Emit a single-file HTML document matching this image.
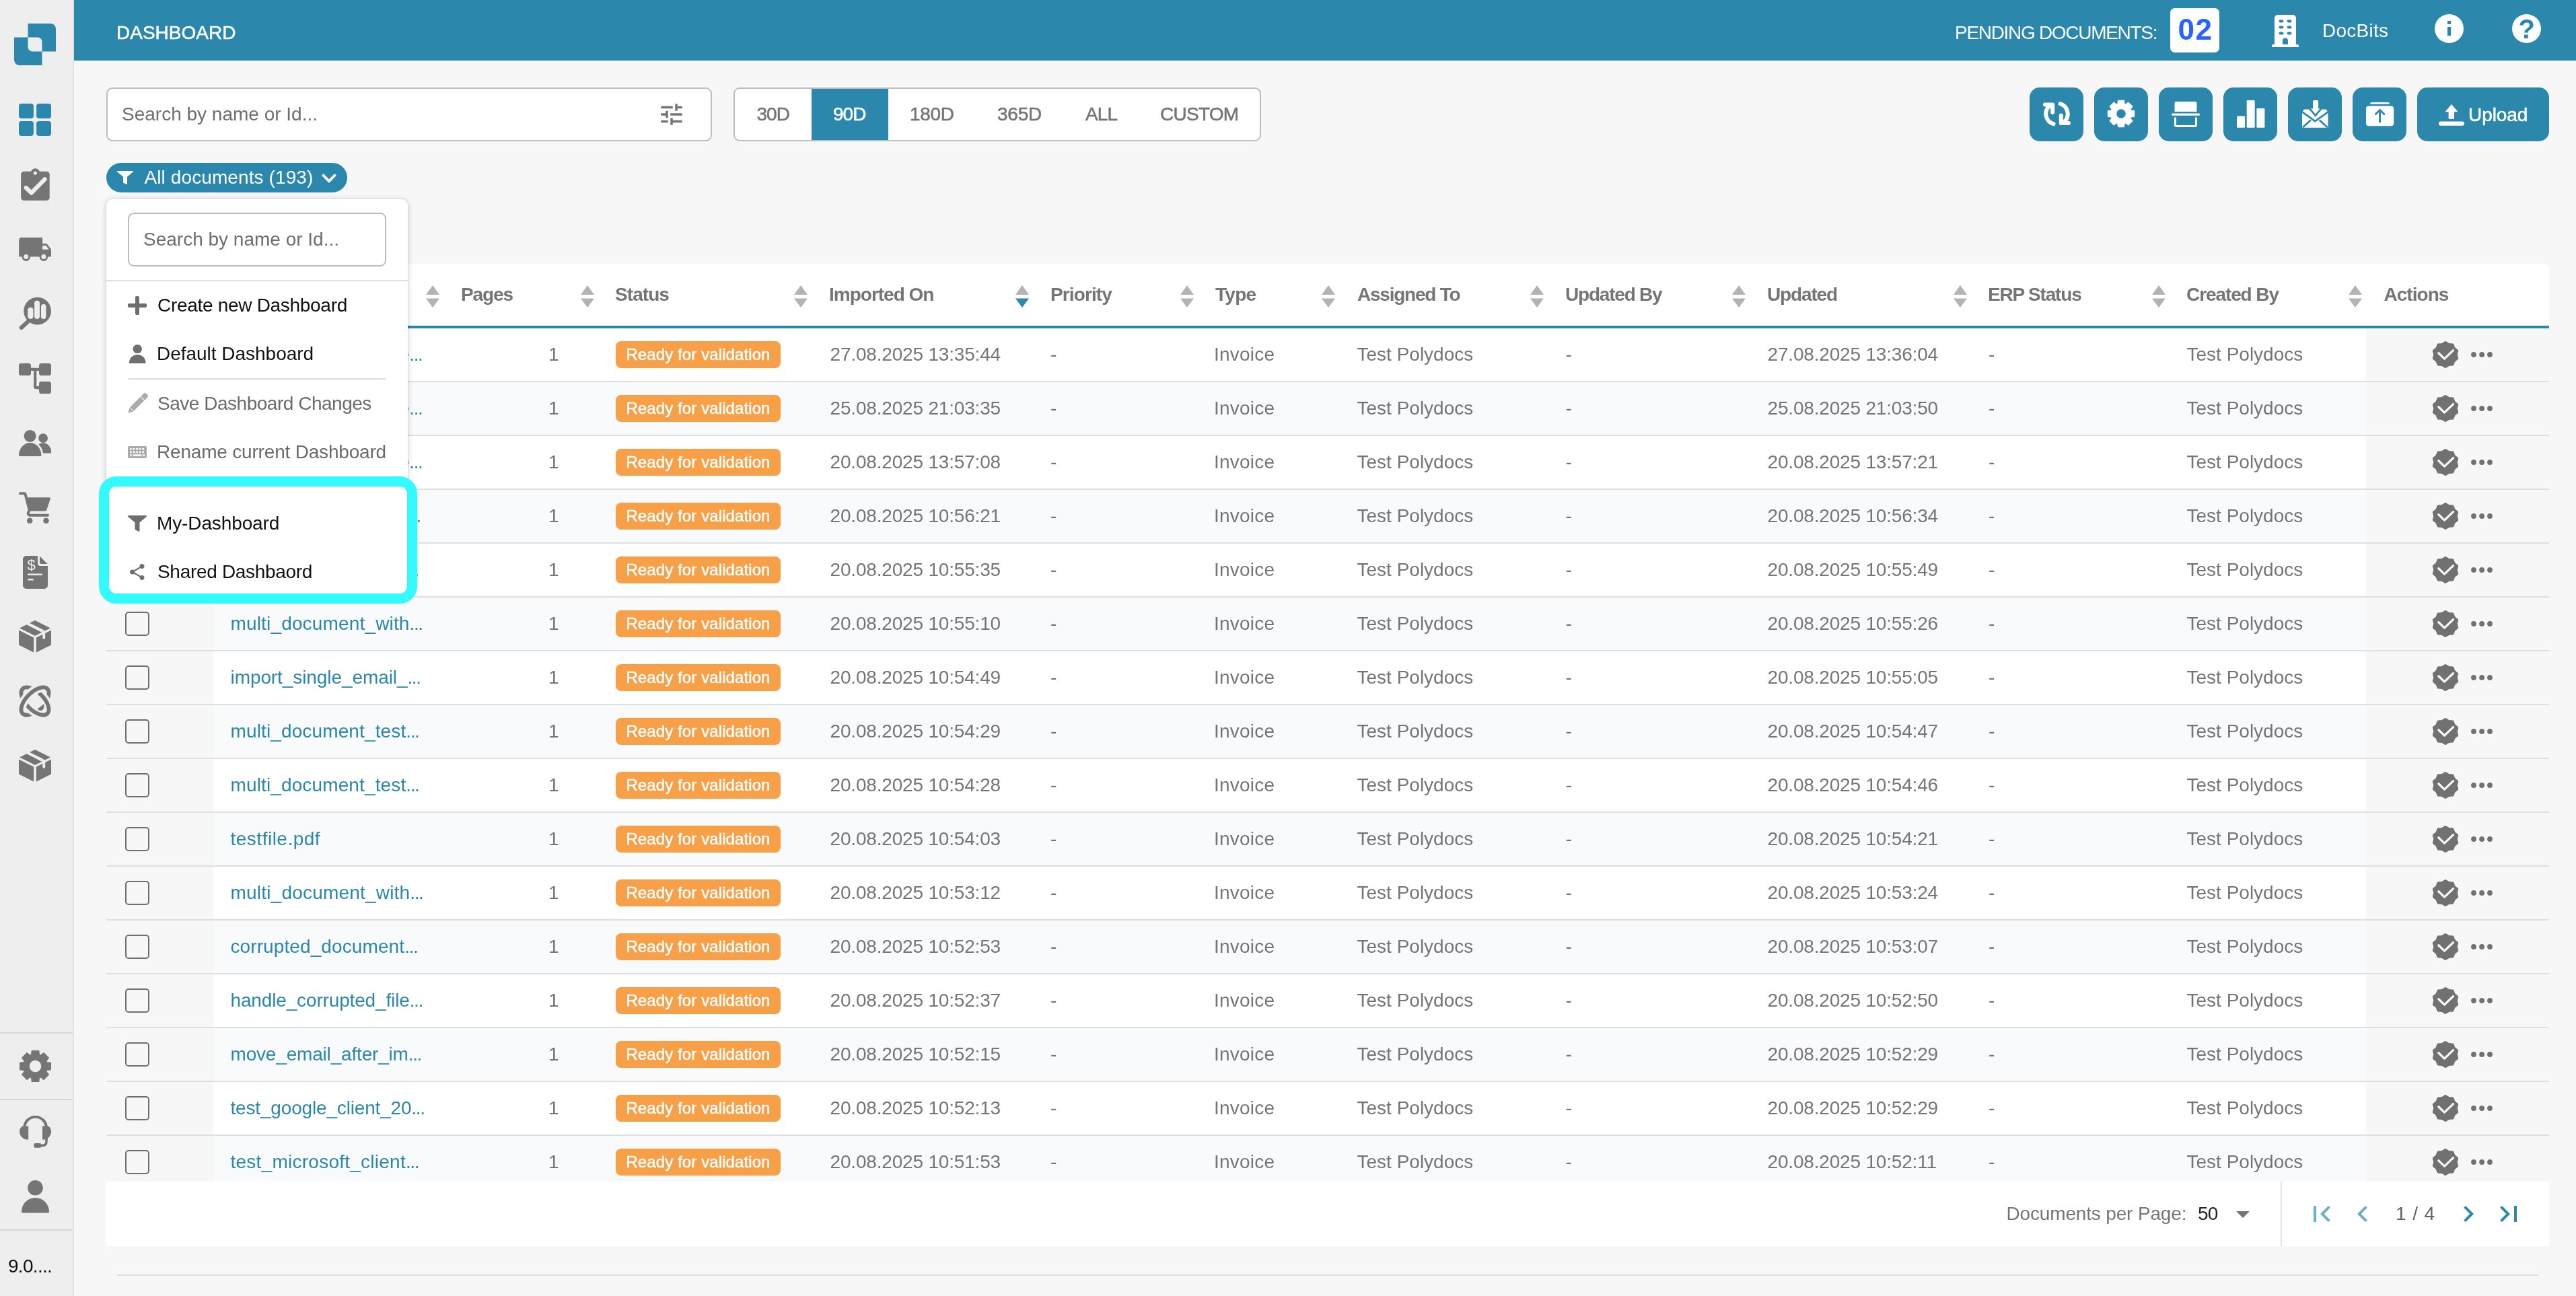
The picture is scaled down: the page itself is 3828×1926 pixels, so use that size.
<!DOCTYPE html><html lang="en"><head><meta charset="utf-8"><title>Dashboard</title><style>
*{box-sizing:border-box;margin:0;padding:0}
html,body{width:3828px;height:1926px;overflow:hidden;background:#f7f7f7}
body{will-change:transform;font-family:"Liberation Sans",sans-serif;font-size:28px;color:#757575;position:relative}
.ic{position:absolute;fill:currentColor;overflow:visible}
.t{position:absolute;white-space:nowrap;display:block}
.m{-webkit-text-stroke:0.55px currentColor}
.b{font-weight:bold}
#side{position:absolute;left:0;top:0;width:108px;height:1926px;background:#eeeeee}
#sideb{position:absolute;left:108px;top:0;width:2px;height:1926px;background:#e2e2e2}
.sd{position:absolute;left:0;width:108px;height:2px;background:#d6d6d6}
#top{position:absolute;left:110px;top:0;width:3718px;height:90px;background:#2b87ab}
.box{position:absolute;background:#fff;border:2px solid #bdbdbd;border-radius:9px}
.abtn{position:absolute;top:130px;width:80px;height:80px;border-radius:15px;background:#2b87ab}
#pill{position:absolute;left:158px;top:242px;width:358px;height:44px;border-radius:22px;background:#2b87ab}
.seg{position:absolute;top:132px;height:76px}
.row{position:absolute;left:158px;width:3630px;height:80px;border-bottom:2px solid #dfdfdf}
.row.o{background:#fff} .row.e{background:#f9fafc}
.cb{position:absolute;left:0;top:0;width:159px;height:78px;background:#f7f7f7}
.ck{position:absolute;left:28px;top:21px;width:36px;height:36px;border:2px solid #6f6f6f;border-radius:5px;background:transparent}
.ac{position:absolute;left:3358px;top:0;width:272px;height:78px;background:#f7f7f7}
.c{position:absolute;top:18.5px;height:40px;line-height:40px;white-space:nowrap}
.lnk{color:#2b87ab;letter-spacing:0.08px}
.bdg{position:absolute;left:757px;top:19px;width:245px;height:40px;border-radius:8px;background:#f7a048;color:#fff;font-size:24px;line-height:40px;text-align:center;letter-spacing:0.1px;-webkit-text-stroke:0.5px #fff}
.d{letter-spacing:-0.18px}
.el{letter-spacing:-1.4px}
.hd{position:absolute;font-weight:bold;white-space:nowrap;height:40px;line-height:40px;top:418px}
</style></head><body>
<div id="side"></div><div id="sideb"></div>
<svg class="ic" style="left:21px;top:35px;width:62px;height:62px;color:#2b87ab;" viewBox="0 0 62 62"><path d="M20.500 0H54a8 8 0 0 1 8 8V41.500H20.500z"/><path d="M0 20.500H41.500V62H8a8 8 0 0 1-8-8z"/><path fill="#eeeeee" d="M20.500 20.500H35a6.500 6.500 0 0 1 6.500 6.500V41.500H27a6.500 6.500 0 0 1-6.500-6.500z"/></svg>
<svg class="ic" style="left:28px;top:154px;width:48px;height:48px;color:#2b87ab;" viewBox="0 0 48 48"><rect x="0" y="0" width="21.900" height="21.900" rx="4"/><rect x="26.100" y="0" width="21.900" height="21.900" rx="4"/><rect x="0" y="26.100" width="21.900" height="21.900" rx="4"/><rect x="26.100" y="26.100" width="21.900" height="21.900" rx="4"/></svg>
<svg class="ic" style="left:31px;top:250px;width:43px;height:48px;color:#757575;" viewBox="0 0 43 48"><rect x="0.100" y="4.700" width="42.600" height="43.300" rx="4.600"/><circle cx="21.400" cy="6.900" r="6.700"/><circle cx="21.400" cy="7.300" r="2.500" fill="#eeeeee"/><path d="M7.700 29L15.700 36.600L35.500 16.400" fill="none" stroke="#eeeeee" stroke-width="6.300" stroke-linecap="round" stroke-linejoin="round"/></svg>
<svg class="ic" style="left:28px;top:353px;width:48px;height:35px;color:#757575;" viewBox="0 0 48 35"><path d="M0.200 4a4 4 0 0 1 4-4H35.100V9H41.400L48 17.500V28.600H0.200Z"/><path d="M35.100 12.100H40.600L44.600 17.800H35.100Z" fill="#eeeeee"/><circle cx="10.700" cy="28.600" r="6.300"/><circle cx="36.900" cy="28.600" r="6.300"/><circle cx="10.700" cy="28.600" r="3.500" fill="#eeeeee"/><circle cx="36.900" cy="28.600" r="3.500" fill="#eeeeee"/></svg>
<svg class="ic" style="left:28px;top:442px;width:48px;height:48px;color:#757575;" viewBox="0 0 48 48"><circle cx="27.600" cy="20.200" r="20.400"/><path d="M3.700 45L14.500 35" stroke="currentColor" stroke-width="6" stroke-linecap="round" fill="none"/><g fill="#eeeeee"><rect x="13.300" y="14.900" width="8.100" height="17" rx="3.800"/><rect x="23.100" y="4.800" width="7.900" height="27.100" rx="3.800"/><rect x="33" y="10" width="7.500" height="21.900" rx="3.700"/></g></svg>
<svg class="ic" style="left:28px;top:540px;width:48px;height:45px;color:#757575;" viewBox="0 0 48 45"><rect x="0" y="0" width="18" height="18" rx="3.600"/><rect x="30" y="0" width="18" height="18" rx="3.600"/><rect x="30" y="27" width="18" height="18" rx="3.600"/><path d="M17 8.800H31M24.200 8.800V34.600Q24.200 36.100 25.700 36.100H31" stroke="currentColor" stroke-width="4.200" fill="none"/></svg>
<svg class="ic" style="left:28px;top:639px;width:48.2px;height:39px;color:#757575;" viewBox="0 0 48.2 39"><circle cx="36.100" cy="12.100" r="6.900"/><path d="M24 34.400V33A12.100 13.800 0 0 1 48.200 33Q48.200 34.400 46.700 34.400Z"/><path d="M0 37.400A16.700 18.300 0 0 1 33.400 37.400Q33.400 38.900 31.900 38.900H1.500Q0 38.900 0 37.400Z" stroke="#eeeeee" stroke-width="5.600"/><path d="M0 37.400A16.700 18.300 0 0 1 33.400 37.400Q33.400 38.900 31.900 38.900H1.500Q0 38.900 0 37.400Z"/><circle cx="16.600" cy="8.900" r="9"/></svg>
<svg class="ic" style="left:28px;top:731px;width:48px;height:47px;color:#757575;" viewBox="0 0 48 47"><path d="M11 8.300H45Q47.400 8.300 46.700 10.600L41.500 26.500Q40.900 28.400 38.900 28.400H15Z"/><path d="M2 2.200H8.200Q9.300 2.200 9.600 3.300L15.800 27.500Q13.300 30.500 13.800 32.500Q14.400 34.800 17 34.800H43" fill="none" stroke="currentColor" stroke-width="4" stroke-linecap="round" stroke-linejoin="round"/><circle cx="16.200" cy="42.800" r="4.300"/><circle cx="40.500" cy="42.800" r="4.300"/></svg>
<svg class="ic" style="left:34px;top:826px;width:37px;height:49px;color:#757575;" viewBox="0 0 37 49"><path d="M5 0H22V11a4 4 0 0 0 4 4H37V44a5 5 0 0 1-5 5H5a5 5 0 0 1-5-5V5a5 5 0 0 1 5-5z"/><path d="M25 0.500L36.500 12H27a2 2 0 0 1-2-2z"/><text x="12.500" y="20.700" font-family="Liberation Sans, sans-serif" font-size="22" text-anchor="middle" fill="#eeeeee">$</text><rect x="7" y="26.500" width="22" height="2.600" rx="1" fill="#eeeeee"/><rect x="7" y="34" width="9" height="2.600" rx="1" fill="#eeeeee"/></svg>
<svg class="ic" style="left:28px;top:921px;width:48px;height:49.5px;color:#757575;" viewBox="0 0 48 49.5"><path d="M24 1L48 13V37.600L24 49.500L0 37.600V13Z"/><g fill="none" stroke="#eeeeee"><path d="M-1 13.300L24 25.800L49 13.300" stroke-width="3.200"/><path d="M24 25.800V50" stroke-width="3.800"/><path d="M9.900 4.100L35.600 17" stroke-width="4.200"/><path d="M37.250 17.500V26.800" stroke-width="3.900" stroke-linecap="round"/></g></svg>
<svg class="ic" style="left:28px;top:1018px;width:48px;height:48px;color:#757575;" viewBox="0 0 48 48"><defs><clipPath id="otl"><path d="M-6 -6H54L-6 54Z"/></clipPath><clipPath id="obr"><path d="M54 -6V54H-6Z"/></clipPath><mask id="om" maskUnits="userSpaceOnUse" x="-6" y="-6" width="60" height="60"><rect x="-6" y="-6" width="60" height="60" fill="#fff"/><g clip-path="url(#obr)"><ellipse cx="24" cy="24" rx="26" ry="13" transform="rotate(45 24 24)" fill="#000" stroke="#000" stroke-width="13.500"/></g></mask></defs><g fill="none" stroke-width="5.800"><ellipse cx="24" cy="24" rx="26" ry="13" transform="rotate(45 24 24)" stroke="currentColor"/><g clip-path="url(#otl)"><ellipse cx="24" cy="24" rx="26" ry="13" transform="rotate(-45 24 24)" stroke="#eeeeee" stroke-width="13.500"/></g><g mask="url(#om)"><ellipse cx="24" cy="24" rx="26" ry="13" transform="rotate(-45 24 24)" stroke="currentColor"/></g></g><path d="M37.300 28L27.800 35.600Q30 38.600 33.500 38Q38.400 36 37.300 28Z"/></svg>
<svg class="ic" style="left:28px;top:1113px;width:48px;height:49.5px;color:#757575;" viewBox="0 0 48 49.5"><path d="M24 1L48 13V37.600L24 49.500L0 37.600V13Z"/><g fill="none" stroke="#eeeeee"><path d="M-1 13.300L24 25.800L49 13.300" stroke-width="3.200"/><path d="M24 25.800V50" stroke-width="3.800"/><path d="M9.900 4.100L35.600 17" stroke-width="4.200"/><path d="M37.250 17.500V26.800" stroke-width="3.900" stroke-linecap="round"/></g></svg>
<div class="sd" style="top:1534px"></div>
<svg class="ic" style="left:27.5px;top:1559.5px;width:49px;height:49px;color:#757575;" viewBox="-21 -21 42 42"><path d="M-4.82 -14.41L-4.29 -19.33L4.29 -19.33L4.82 -14.41L6.78 -13.60L10.64 -16.70L16.70 -10.64L13.60 -6.78L14.41 -4.82L19.33 -4.29L19.33 4.29L14.41 4.82L13.60 6.78L16.70 10.64L10.64 16.70L6.78 13.60L4.82 14.41L4.29 19.33L-4.29 19.33L-4.82 14.41L-6.78 13.60L-10.64 16.70L-16.70 10.64L-13.60 6.78L-14.41 4.82L-19.33 4.29L-19.33 -4.29L-14.41 -4.82L-13.60 -6.78L-16.70 -10.64L-10.64 -16.70L-6.78 -13.60ZM8.3 0A8.3 8.3 0 1 0 -8.3 0A8.3 8.3 0 1 0 8.3 0Z" fill-rule="evenodd" stroke="currentColor" stroke-width="1.6" stroke-linejoin="round"/></svg>
<div class="sd" style="top:1633px"></div>
<svg class="ic" style="left:30px;top:1658px;width:45.2px;height:48px;color:#757575;" viewBox="0 0 45.2 48"><path d="M6.400 17.500A16.200 15.600 0 0 1 38.800 17.500" fill="none" stroke="currentColor" stroke-width="3.900"/><path d="M12.200 15.600V34.600Q12.200 36 10.600 35.800C-3.500 34 -3.500 17.500 4.300 15.600Z"/><path d="M33 15.600V34.600Q33 36 34.600 35.800C48.700 34 48.700 17.500 40.900 15.600Z"/><path d="M39 33V38.500Q39 44.400 33 44.400H28" fill="none" stroke="currentColor" stroke-width="3.600"/><rect x="20.400" y="41.100" width="10.800" height="6.700" rx="2"/></svg>
<svg class="ic" style="left:32px;top:1753.6px;width:41px;height:48.4px;color:#757575;" viewBox="0 0 41 48.4"><circle cx="20.500" cy="11.300" r="11.300"/><path d="M0 46.900A20.500 21 0 0 1 41 46.900Q41 48.400 39.500 48.400H1.500Q0 48.400 0 46.900Z"/></svg>
<div class="sd" style="top:1827px"></div>
<span class="t " style="left:12px;top:1861.5px;height:40px;line-height:40px;color:#111;letter-spacing:-0.7px">9.0....</span>
<div id="top"></div>
<span class="t m" style="left:173px;top:29.0px;height:40px;line-height:40px;color:#fff;letter-spacing:0px">DASHBOARD</span>
<span class="t " style="left:2905px;top:29.0px;height:40px;line-height:40px;color:#fff;letter-spacing:-1.3px">PENDING DOCUMENTS:</span>
<div style="position:absolute;left:3225px;top:12px;width:73px;height:66px;border-radius:7px;background:#fff"></div>
<span class="t b" style="left:3236.5px;top:13.5px;height:60px;line-height:60px;color:#2962ff;font-size:44px;letter-spacing:1.5px">02</span>
<svg class="ic" style="left:3376px;top:22px;width:40px;height:48px;color:#fff;" viewBox="0 0 40 48"><path d="M9 0H31a5 5 0 0 1 5 5V44H38.500a1.500 1.500 0 0 1 1.500 1.500V48H0V45.500A1.500 1.500 0 0 1 1.500 44H4V5a5 5 0 0 1 5-5z"/><g fill="#2b87ab"><rect x="10.500" y="7.500" width="7" height="4" rx="2"/><rect x="22.500" y="7.500" width="7" height="4" rx="2"/><rect x="10.500" y="16.500" width="7" height="4" rx="2"/><rect x="22.500" y="16.500" width="7" height="4" rx="2"/><rect x="10.500" y="25.500" width="7" height="4" rx="2"/><rect x="22.500" y="25.500" width="7" height="4" rx="2"/><path d="M16 44V38.500a4 4 0 0 1 8 0V44z"/></g></svg>
<span class="t " style="left:3451px;top:26.0px;height:40px;line-height:40px;color:#fff;letter-spacing:0.27px">DocBits</span>
<div style="position:absolute;left:3617.5px;top:20.5px;width:43px;height:43px;border-radius:50%;background:#fff"></div>
<div style="position:absolute;left:3732.5px;top:20.5px;width:43px;height:43px;border-radius:50%;background:#fff"></div>
<svg class="ic" style="left:3636.5px;top:31px;width:5px;height:22px;color:#2b87ab;" viewBox="0 0 5 22"><rect x="0" y="0" width="5" height="5"/><rect x="0" y="9" width="5" height="13"/></svg>
<span class="t b" style="left:3742.5px;top:19.0px;height:48px;line-height:48px;color:#2b87ab;font-size:40px">?</span>
<div class="box" style="left:158px;top:130px;width:900px;height:80px"></div>
<span class="t " style="left:181px;top:150.0px;height:40px;line-height:40px;letter-spacing:0px;color:#6e6e6e">Search by name or Id...</span>
<svg class="ic" style="left:977.2px;top:148.7px;width:42px;height:42px;color:#757575;" viewBox="0 0 24 24"><path d="M3 17v2h6v-2H3zM3 5v2h10V5H3zm10 16v-2h8v-2h-8v-2h-2v6h2zM7 9v2H3v2h4v2h2V9H7zm14 4v-2H11v2h10zm-6-4h2V7h4V5h-4V3h-2v6z"/></svg>
<div class="box" style="left:1090px;top:130px;width:784px;height:80px"></div>
<div class="seg" style="left:1206px;width:114px;background:#2b87ab"></div>
<span class="t m" style="left:1124.5px;top:150.0px;height:40px;line-height:40px;color:#757575;letter-spacing:-0.96px">30D</span>
<span class="t m" style="left:1238px;top:150.0px;height:40px;line-height:40px;color:#fff;letter-spacing:-0.96px">90D</span>
<span class="t m" style="left:1352px;top:150.0px;height:40px;line-height:40px;color:#757575;letter-spacing:-0.36px">180D</span>
<span class="t m" style="left:1482px;top:150.0px;height:40px;line-height:40px;color:#757575;letter-spacing:-0.24px">365D</span>
<span class="t m" style="left:1613px;top:150.0px;height:40px;line-height:40px;color:#757575;letter-spacing:-0.85px">ALL</span>
<span class="t m" style="left:1724px;top:150.0px;height:40px;line-height:40px;color:#757575;letter-spacing:-0.74px">CUSTOM</span>
<div class="abtn" style="left:3016px"></div>
<div class="abtn" style="left:3112px"></div>
<div class="abtn" style="left:3208px"></div>
<div class="abtn" style="left:3304px"></div>
<div class="abtn" style="left:3400px"></div>
<div class="abtn" style="left:3496px"></div>
<svg class="ic" style="left:3016px;top:130px;width:80px;height:80px;color:#fff;" viewBox="0 0 80 80"><g fill="none" stroke="currentColor" stroke-width="6" stroke-linecap="round" stroke-linejoin="round"><path id="sy" d="M35.6 54.2A15.800 15.800 0 0 1 28.600 28.200M23 25.400H34.200V37"/><path d="M35.6 54.2A15.800 15.800 0 0 1 28.600 28.200M23 25.400H34.200V37" transform="rotate(180 40.5 39.2)"/></g></svg>
<svg class="ic" style="left:3131.4px;top:148.4px;width:42px;height:42px;color:#fff;" viewBox="-21 -21 42 42"><path d="M-4.82 -14.41L-4.29 -19.33L4.29 -19.33L4.82 -14.41L6.78 -13.60L10.64 -16.70L16.70 -10.64L13.60 -6.78L14.41 -4.82L19.33 -4.29L19.33 4.29L14.41 4.82L13.60 6.78L16.70 10.64L10.64 16.70L6.78 13.60L4.82 14.41L4.29 19.33L-4.29 19.33L-4.82 14.41L-6.78 13.60L-10.64 16.70L-16.70 10.64L-13.60 6.78L-14.41 4.82L-19.33 4.29L-19.33 -4.29L-14.41 -4.82L-13.60 -6.78L-16.70 -10.64L-10.64 -16.70L-6.78 -13.60ZM7.6 0A7.6 7.6 0 1 0 -7.6 0A7.6 7.6 0 1 0 7.6 0Z" fill-rule="evenodd" stroke="currentColor" stroke-width="1.6" stroke-linejoin="round"/></svg>
<svg class="ic" style="left:3227px;top:151px;width:42px;height:38px;color:#fff;" viewBox="0 0 42 38"><path d="M7 0H35a2.500 2.500 0 0 1 2.500 2.500V15H4.500V2.500A2.500 2.500 0 0 1 7 0z"/><rect x="0" y="17.500" width="42" height="3.200" rx="1.500"/><path d="M5.500 23.500V34.500a2 2 0 0 0 2 2H34.500a2 2 0 0 0 2-2V23.500" fill="none" stroke="currentColor" stroke-width="3"/></svg>
<svg class="ic" style="left:3324px;top:149px;width:41.4px;height:40.8px;color:#fff;" viewBox="0 0 41.4 40.8"><rect x="0" y="23.400" width="12" height="17.400" rx="1.200"/><rect x="14.700" y="0" width="12" height="40.800" rx="1.200"/><rect x="29.400" y="12" width="12" height="28.800" rx="1.200"/></svg>
<svg class="ic" style="left:3421.2px;top:149px;width:38.6px;height:40.8px;color:#fff;" viewBox="0 0 38.6 40.8"><path d="M0 17.400L3 13.600H16.100V2a2 2 0 0 1 2-2h4a2 2 0 0 1 2 2V13.600H35.600L38.600 17.400V40.800H0Z"/><path d="M9.800 12.500H29.900L28 14.500H11.700Z"/><g fill="none" stroke="#2b87ab" stroke-width="2.700"><path d="M10 11.200L19.800 22.600L29.600 11.200"/><path d="M-1 16.600L19.300 31.200L39.600 16.600"/><path d="M0.800 40.600L12.800 29.400M37.800 40.600L25.800 29.400"/></g></svg>
<svg class="ic" style="left:3515.8px;top:151.7px;width:41.2px;height:35.3px;color:#fff;" viewBox="0 0 41.2 35.3"><path d="M8.900 0H32.200a3 3 0 0 1 3 2.800H5.900A3 3 0 0 1 8.900 0z"/><rect x="0" y="5.500" width="41.200" height="29.800" rx="4"/><path d="M20.600 29.300V12.200M14.400 17.600L20.600 11.400L26.800 17.600" fill="none" stroke="#2b87ab" stroke-width="2.900" stroke-linecap="round" stroke-linejoin="round"/></svg>
<div class="abtn" style="left:3592px;width:196px"></div>
<svg class="ic" style="left:3624px;top:155px;width:38px;height:32px;color:#fff;" viewBox="0 0 38 32"><path d="M19 0L28.600 11.300H23V20.400a1.500 1.500 0 0 1-1.500 1.500H16.100a1.500 1.500 0 0 1-1.500-1.500V11.300H9.400z"/><rect x="0" y="25.400" width="38" height="6.300" rx="3"/></svg>
<span class="t m" style="left:3668px;top:151.0px;height:40px;line-height:40px;color:#fff;letter-spacing:-0.08px">Upload</span>
<div id="pill"></div>
<svg class="ic" style="left:174px;top:254px;width:24px;height:20px;color:#fff;" viewBox="0 0 512 512" preserveAspectRatio="none"><path d="M487.976 0H24.028C2.710 0-8.047 25.866 7.058 40.971L192 225.941V432c0 7.831 3.821 15.170 10.237 19.662l80 55.980C298.020 518.690 320 507.493 320 487.980V225.941l184.947-184.970C520.021 25.896 509.338 0 487.976 0z"/></svg>
<span class="t " style="left:214.5px;top:244.0px;height:40px;line-height:40px;color:#fff;letter-spacing:0.1px">All documents (193)</span>
<svg class="ic" style="left:478px;top:257.5px;width:22px;height:14px;color:#fff;" viewBox="0 125 448 262"><path d="M207.029 381.476L12.686 187.132c-9.373-9.373-9.373-24.569 0-33.941l22.667-22.667c9.357-9.357 24.522-9.375 33.901-.040L224 284.505l154.745-154.021c9.379-9.335 24.544-9.317 33.901.040l22.667 22.667c9.373 9.373 9.373 24.569 0 33.941L240.971 381.476c-9.373 9.372-24.569 9.372-33.942 0z"/></svg>
<div style="position:absolute;left:158px;top:392px;width:3630px;height:1364px;background:#fff;border-radius:8px 8px 0 0"></div>
<span class="hd" style="left:342px;letter-spacing:-1px">Name</span>
<svg class="ic" style="left:633px;top:424.3px;width:20px;height:33px;color:#b3b3b3;" viewBox="0 0 20 33"><path d="M10 0L20 14H0z" fill="#b3b3b3"/><path d="M0 19.500H20L10 33z" fill="currentColor"/></svg>
<span class="hd" style="left:685px;letter-spacing:-1.1px">Pages</span>
<svg class="ic" style="left:863px;top:424.3px;width:20px;height:33px;color:#b3b3b3;" viewBox="0 0 20 33"><path d="M10 0L20 14H0z" fill="#b3b3b3"/><path d="M0 19.500H20L10 33z" fill="currentColor"/></svg>
<span class="hd" style="left:914px;letter-spacing:-0.93px">Status</span>
<svg class="ic" style="left:1180px;top:424.3px;width:20px;height:33px;color:#b3b3b3;" viewBox="0 0 20 33"><path d="M10 0L20 14H0z" fill="#b3b3b3"/><path d="M0 19.500H20L10 33z" fill="currentColor"/></svg>
<span class="hd" style="left:1232px;letter-spacing:-1.0px">Imported On</span>
<svg class="ic" style="left:1509px;top:424.3px;width:20px;height:33px;color:#2b87ab;" viewBox="0 0 20 33"><path d="M10 0L20 14H0z" fill="#b3b3b3"/><path d="M0 19.500H20L10 33z" fill="currentColor"/></svg>
<span class="hd" style="left:1561px;letter-spacing:-0.88px">Priority</span>
<svg class="ic" style="left:1754px;top:424.3px;width:20px;height:33px;color:#b3b3b3;" viewBox="0 0 20 33"><path d="M10 0L20 14H0z" fill="#b3b3b3"/><path d="M0 19.500H20L10 33z" fill="currentColor"/></svg>
<span class="hd" style="left:1806px;letter-spacing:-0.7px">Type</span>
<svg class="ic" style="left:1964px;top:424.3px;width:20px;height:33px;color:#b3b3b3;" viewBox="0 0 20 33"><path d="M10 0L20 14H0z" fill="#b3b3b3"/><path d="M0 19.500H20L10 33z" fill="currentColor"/></svg>
<span class="hd" style="left:2017px;letter-spacing:-1.23px">Assigned To</span>
<svg class="ic" style="left:2274px;top:424.3px;width:20px;height:33px;color:#b3b3b3;" viewBox="0 0 20 33"><path d="M10 0L20 14H0z" fill="#b3b3b3"/><path d="M0 19.500H20L10 33z" fill="currentColor"/></svg>
<span class="hd" style="left:2326px;letter-spacing:-1.21px">Updated By</span>
<svg class="ic" style="left:2574px;top:424.3px;width:20px;height:33px;color:#b3b3b3;" viewBox="0 0 20 33"><path d="M10 0L20 14H0z" fill="#b3b3b3"/><path d="M0 19.500H20L10 33z" fill="currentColor"/></svg>
<span class="hd" style="left:2626px;letter-spacing:-1.15px">Updated</span>
<svg class="ic" style="left:2903px;top:424.3px;width:20px;height:33px;color:#b3b3b3;" viewBox="0 0 20 33"><path d="M10 0L20 14H0z" fill="#b3b3b3"/><path d="M0 19.500H20L10 33z" fill="currentColor"/></svg>
<span class="hd" style="left:2954px;letter-spacing:-1.19px">ERP Status</span>
<svg class="ic" style="left:3198px;top:424.3px;width:20px;height:33px;color:#b3b3b3;" viewBox="0 0 20 33"><path d="M10 0L20 14H0z" fill="#b3b3b3"/><path d="M0 19.500H20L10 33z" fill="currentColor"/></svg>
<span class="hd" style="left:3249px;letter-spacing:-1.09px">Created By</span>
<svg class="ic" style="left:3490px;top:424.3px;width:20px;height:33px;color:#b3b3b3;" viewBox="0 0 20 33"><path d="M10 0L20 14H0z" fill="#b3b3b3"/><path d="M0 19.500H20L10 33z" fill="currentColor"/></svg>
<span class="hd" style="left:3542.5px;letter-spacing:-0.96px">Actions</span>
<div style="position:absolute;left:158px;top:484px;width:3630px;height:4px;background:#2b87ab"></div>
<div style="position:absolute;left:0;top:488px;width:3828px;height:1268px;overflow:hidden">
<div class="row o" style="top:0px"><div class="cb"><div class="ck"></div></div><span class="c lnk" style="right:3160.5px">import_single_file<span class="el">...</span></span><span class="c" style="left:657px">1</span><div class="bdg">Ready for validation</div><span class="c d" style="left:1075.5px">27.08.2025 13:35:44</span><span class="c" style="left:1403px">-</span><span class="c" style="left:1646px;letter-spacing:0.22px">Invoice</span><span class="c" style="left:1858.5px">Test Polydocs</span><span class="c" style="left:2168.5px">-</span><span class="c d" style="left:2468.5px">27.08.2025 13:36:04</span><span class="c" style="left:2797px">-</span><span class="c" style="left:3091.5px">Test Polydocs</span><div class="ac"><svg class="ic" style="left:97px;top:17.9px;width:42px;height:42px;color:#717171;" viewBox="-21 -21 42 42"><path d="M0.00 -18.60L5.01 -15.41L10.93 -15.05L13.11 -9.52L17.69 -5.75L16.20 0.00L17.69 5.75L13.11 9.52L10.93 15.05L5.01 15.41L0.00 18.60L-5.01 15.41L-10.93 15.05L-13.11 9.52L-17.69 5.75L-16.20 0.00L-17.69 -5.75L-13.11 -9.52L-10.93 -15.05L-5.01 -15.41Z" stroke="currentColor" stroke-width="3.0" stroke-linejoin="round"/><path d="M-10.2 -2.3L-1.5 6.1L11.5 -6.4" fill="none" stroke="#f7f7f7" stroke-width="3.3" stroke-linecap="round" stroke-linejoin="round"/></svg><svg class="ic" style="left:155.9px;top:34.9px;width:32px;height:8px;color:#717171;" viewBox="0 0 32 8"><circle cx="4" cy="4" r="3.900"/><circle cx="16.100" cy="4" r="3.900"/><circle cx="28" cy="4" r="3.900"/></svg></div></div>
<div class="row e" style="top:80px"><div class="cb"><div class="ck"></div></div><span class="c lnk" style="right:3160.5px">import_single_file<span class="el">...</span></span><span class="c" style="left:657px">1</span><div class="bdg">Ready for validation</div><span class="c d" style="left:1075.5px">25.08.2025 21:03:35</span><span class="c" style="left:1403px">-</span><span class="c" style="left:1646px;letter-spacing:0.22px">Invoice</span><span class="c" style="left:1858.5px">Test Polydocs</span><span class="c" style="left:2168.5px">-</span><span class="c d" style="left:2468.5px">25.08.2025 21:03:50</span><span class="c" style="left:2797px">-</span><span class="c" style="left:3091.5px">Test Polydocs</span><div class="ac"><svg class="ic" style="left:97px;top:17.9px;width:42px;height:42px;color:#717171;" viewBox="-21 -21 42 42"><path d="M0.00 -18.60L5.01 -15.41L10.93 -15.05L13.11 -9.52L17.69 -5.75L16.20 0.00L17.69 5.75L13.11 9.52L10.93 15.05L5.01 15.41L0.00 18.60L-5.01 15.41L-10.93 15.05L-13.11 9.52L-17.69 5.75L-16.20 0.00L-17.69 -5.75L-13.11 -9.52L-10.93 -15.05L-5.01 -15.41Z" stroke="currentColor" stroke-width="3.0" stroke-linejoin="round"/><path d="M-10.2 -2.3L-1.5 6.1L11.5 -6.4" fill="none" stroke="#f7f7f7" stroke-width="3.3" stroke-linecap="round" stroke-linejoin="round"/></svg><svg class="ic" style="left:155.9px;top:34.9px;width:32px;height:8px;color:#717171;" viewBox="0 0 32 8"><circle cx="4" cy="4" r="3.900"/><circle cx="16.100" cy="4" r="3.900"/><circle cx="28" cy="4" r="3.900"/></svg></div></div>
<div class="row o" style="top:160px"><div class="cb"><div class="ck"></div></div><span class="c lnk" style="right:3160.5px">import_single_file<span class="el">...</span></span><span class="c" style="left:657px">1</span><div class="bdg">Ready for validation</div><span class="c d" style="left:1075.5px">20.08.2025 13:57:08</span><span class="c" style="left:1403px">-</span><span class="c" style="left:1646px;letter-spacing:0.22px">Invoice</span><span class="c" style="left:1858.5px">Test Polydocs</span><span class="c" style="left:2168.5px">-</span><span class="c d" style="left:2468.5px">20.08.2025 13:57:21</span><span class="c" style="left:2797px">-</span><span class="c" style="left:3091.5px">Test Polydocs</span><div class="ac"><svg class="ic" style="left:97px;top:17.9px;width:42px;height:42px;color:#717171;" viewBox="-21 -21 42 42"><path d="M0.00 -18.60L5.01 -15.41L10.93 -15.05L13.11 -9.52L17.69 -5.75L16.20 0.00L17.69 5.75L13.11 9.52L10.93 15.05L5.01 15.41L0.00 18.60L-5.01 15.41L-10.93 15.05L-13.11 9.52L-17.69 5.75L-16.20 0.00L-17.69 -5.75L-13.11 -9.52L-10.93 -15.05L-5.01 -15.41Z" stroke="currentColor" stroke-width="3.0" stroke-linejoin="round"/><path d="M-10.2 -2.3L-1.5 6.1L11.5 -6.4" fill="none" stroke="#f7f7f7" stroke-width="3.3" stroke-linecap="round" stroke-linejoin="round"/></svg><svg class="ic" style="left:155.9px;top:34.9px;width:32px;height:8px;color:#717171;" viewBox="0 0 32 8"><circle cx="4" cy="4" r="3.900"/><circle cx="16.100" cy="4" r="3.900"/><circle cx="28" cy="4" r="3.900"/></svg></div></div>
<div class="row e" style="top:240px"><div class="cb"><div class="ck"></div></div><span class="c lnk" style="right:3163px">multi_document_test_<span class="el">...</span></span><span class="c" style="left:657px">1</span><div class="bdg">Ready for validation</div><span class="c d" style="left:1075.5px">20.08.2025 10:56:21</span><span class="c" style="left:1403px">-</span><span class="c" style="left:1646px;letter-spacing:0.22px">Invoice</span><span class="c" style="left:1858.5px">Test Polydocs</span><span class="c" style="left:2168.5px">-</span><span class="c d" style="left:2468.5px">20.08.2025 10:56:34</span><span class="c" style="left:2797px">-</span><span class="c" style="left:3091.5px">Test Polydocs</span><div class="ac"><svg class="ic" style="left:97px;top:17.9px;width:42px;height:42px;color:#717171;" viewBox="-21 -21 42 42"><path d="M0.00 -18.60L5.01 -15.41L10.93 -15.05L13.11 -9.52L17.69 -5.75L16.20 0.00L17.69 5.75L13.11 9.52L10.93 15.05L5.01 15.41L0.00 18.60L-5.01 15.41L-10.93 15.05L-13.11 9.52L-17.69 5.75L-16.20 0.00L-17.69 -5.75L-13.11 -9.52L-10.93 -15.05L-5.01 -15.41Z" stroke="currentColor" stroke-width="3.0" stroke-linejoin="round"/><path d="M-10.2 -2.3L-1.5 6.1L11.5 -6.4" fill="none" stroke="#f7f7f7" stroke-width="3.3" stroke-linecap="round" stroke-linejoin="round"/></svg><svg class="ic" style="left:155.9px;top:34.9px;width:32px;height:8px;color:#717171;" viewBox="0 0 32 8"><circle cx="4" cy="4" r="3.900"/><circle cx="16.100" cy="4" r="3.900"/><circle cx="28" cy="4" r="3.900"/></svg></div></div>
<div class="row o" style="top:320px"><div class="cb"><div class="ck"></div></div><span class="c lnk" style="right:3166px">multi_document_test_<span class="el">...</span></span><span class="c" style="left:657px">1</span><div class="bdg">Ready for validation</div><span class="c d" style="left:1075.5px">20.08.2025 10:55:35</span><span class="c" style="left:1403px">-</span><span class="c" style="left:1646px;letter-spacing:0.22px">Invoice</span><span class="c" style="left:1858.5px">Test Polydocs</span><span class="c" style="left:2168.5px">-</span><span class="c d" style="left:2468.5px">20.08.2025 10:55:49</span><span class="c" style="left:2797px">-</span><span class="c" style="left:3091.5px">Test Polydocs</span><div class="ac"><svg class="ic" style="left:97px;top:17.9px;width:42px;height:42px;color:#717171;" viewBox="-21 -21 42 42"><path d="M0.00 -18.60L5.01 -15.41L10.93 -15.05L13.11 -9.52L17.69 -5.75L16.20 0.00L17.69 5.75L13.11 9.52L10.93 15.05L5.01 15.41L0.00 18.60L-5.01 15.41L-10.93 15.05L-13.11 9.52L-17.69 5.75L-16.20 0.00L-17.69 -5.75L-13.11 -9.52L-10.93 -15.05L-5.01 -15.41Z" stroke="currentColor" stroke-width="3.0" stroke-linejoin="round"/><path d="M-10.2 -2.3L-1.5 6.1L11.5 -6.4" fill="none" stroke="#f7f7f7" stroke-width="3.3" stroke-linecap="round" stroke-linejoin="round"/></svg><svg class="ic" style="left:155.9px;top:34.9px;width:32px;height:8px;color:#717171;" viewBox="0 0 32 8"><circle cx="4" cy="4" r="3.900"/><circle cx="16.100" cy="4" r="3.900"/><circle cx="28" cy="4" r="3.900"/></svg></div></div>
<div class="row e" style="top:400px"><div class="cb"><div class="ck"></div></div><span class="c lnk" style="left:184.5px;letter-spacing:0.16px">multi_document_with<span class="el">...</span></span><span class="c" style="left:657px">1</span><div class="bdg">Ready for validation</div><span class="c d" style="left:1075.5px">20.08.2025 10:55:10</span><span class="c" style="left:1403px">-</span><span class="c" style="left:1646px;letter-spacing:0.22px">Invoice</span><span class="c" style="left:1858.5px">Test Polydocs</span><span class="c" style="left:2168.5px">-</span><span class="c d" style="left:2468.5px">20.08.2025 10:55:26</span><span class="c" style="left:2797px">-</span><span class="c" style="left:3091.5px">Test Polydocs</span><div class="ac"><svg class="ic" style="left:97px;top:17.9px;width:42px;height:42px;color:#717171;" viewBox="-21 -21 42 42"><path d="M0.00 -18.60L5.01 -15.41L10.93 -15.05L13.11 -9.52L17.69 -5.75L16.20 0.00L17.69 5.75L13.11 9.52L10.93 15.05L5.01 15.41L0.00 18.60L-5.01 15.41L-10.93 15.05L-13.11 9.52L-17.69 5.75L-16.20 0.00L-17.69 -5.75L-13.11 -9.52L-10.93 -15.05L-5.01 -15.41Z" stroke="currentColor" stroke-width="3.0" stroke-linejoin="round"/><path d="M-10.2 -2.3L-1.5 6.1L11.5 -6.4" fill="none" stroke="#f7f7f7" stroke-width="3.3" stroke-linecap="round" stroke-linejoin="round"/></svg><svg class="ic" style="left:155.9px;top:34.9px;width:32px;height:8px;color:#717171;" viewBox="0 0 32 8"><circle cx="4" cy="4" r="3.900"/><circle cx="16.100" cy="4" r="3.900"/><circle cx="28" cy="4" r="3.900"/></svg></div></div>
<div class="row o" style="top:480px"><div class="cb"><div class="ck"></div></div><span class="c lnk" style="left:184.5px;letter-spacing:-0.08px">import_single_email_<span class="el">...</span></span><span class="c" style="left:657px">1</span><div class="bdg">Ready for validation</div><span class="c d" style="left:1075.5px">20.08.2025 10:54:49</span><span class="c" style="left:1403px">-</span><span class="c" style="left:1646px;letter-spacing:0.22px">Invoice</span><span class="c" style="left:1858.5px">Test Polydocs</span><span class="c" style="left:2168.5px">-</span><span class="c d" style="left:2468.5px">20.08.2025 10:55:05</span><span class="c" style="left:2797px">-</span><span class="c" style="left:3091.5px">Test Polydocs</span><div class="ac"><svg class="ic" style="left:97px;top:17.9px;width:42px;height:42px;color:#717171;" viewBox="-21 -21 42 42"><path d="M0.00 -18.60L5.01 -15.41L10.93 -15.05L13.11 -9.52L17.69 -5.75L16.20 0.00L17.69 5.75L13.11 9.52L10.93 15.05L5.01 15.41L0.00 18.60L-5.01 15.41L-10.93 15.05L-13.11 9.52L-17.69 5.75L-16.20 0.00L-17.69 -5.75L-13.11 -9.52L-10.93 -15.05L-5.01 -15.41Z" stroke="currentColor" stroke-width="3.0" stroke-linejoin="round"/><path d="M-10.2 -2.3L-1.5 6.1L11.5 -6.4" fill="none" stroke="#f7f7f7" stroke-width="3.3" stroke-linecap="round" stroke-linejoin="round"/></svg><svg class="ic" style="left:155.9px;top:34.9px;width:32px;height:8px;color:#717171;" viewBox="0 0 32 8"><circle cx="4" cy="4" r="3.900"/><circle cx="16.100" cy="4" r="3.900"/><circle cx="28" cy="4" r="3.900"/></svg></div></div>
<div class="row e" style="top:560px"><div class="cb"><div class="ck"></div></div><span class="c lnk" style="left:184.5px;letter-spacing:0.13px">multi_document_test<span class="el">...</span></span><span class="c" style="left:657px">1</span><div class="bdg">Ready for validation</div><span class="c d" style="left:1075.5px">20.08.2025 10:54:29</span><span class="c" style="left:1403px">-</span><span class="c" style="left:1646px;letter-spacing:0.22px">Invoice</span><span class="c" style="left:1858.5px">Test Polydocs</span><span class="c" style="left:2168.5px">-</span><span class="c d" style="left:2468.5px">20.08.2025 10:54:47</span><span class="c" style="left:2797px">-</span><span class="c" style="left:3091.5px">Test Polydocs</span><div class="ac"><svg class="ic" style="left:97px;top:17.9px;width:42px;height:42px;color:#717171;" viewBox="-21 -21 42 42"><path d="M0.00 -18.60L5.01 -15.41L10.93 -15.05L13.11 -9.52L17.69 -5.75L16.20 0.00L17.69 5.75L13.11 9.52L10.93 15.05L5.01 15.41L0.00 18.60L-5.01 15.41L-10.93 15.05L-13.11 9.52L-17.69 5.75L-16.20 0.00L-17.69 -5.75L-13.11 -9.52L-10.93 -15.05L-5.01 -15.41Z" stroke="currentColor" stroke-width="3.0" stroke-linejoin="round"/><path d="M-10.2 -2.3L-1.5 6.1L11.5 -6.4" fill="none" stroke="#f7f7f7" stroke-width="3.3" stroke-linecap="round" stroke-linejoin="round"/></svg><svg class="ic" style="left:155.9px;top:34.9px;width:32px;height:8px;color:#717171;" viewBox="0 0 32 8"><circle cx="4" cy="4" r="3.900"/><circle cx="16.100" cy="4" r="3.900"/><circle cx="28" cy="4" r="3.900"/></svg></div></div>
<div class="row o" style="top:640px"><div class="cb"><div class="ck"></div></div><span class="c lnk" style="left:184.5px;letter-spacing:0.13px">multi_document_test<span class="el">...</span></span><span class="c" style="left:657px">1</span><div class="bdg">Ready for validation</div><span class="c d" style="left:1075.5px">20.08.2025 10:54:28</span><span class="c" style="left:1403px">-</span><span class="c" style="left:1646px;letter-spacing:0.22px">Invoice</span><span class="c" style="left:1858.5px">Test Polydocs</span><span class="c" style="left:2168.5px">-</span><span class="c d" style="left:2468.5px">20.08.2025 10:54:46</span><span class="c" style="left:2797px">-</span><span class="c" style="left:3091.5px">Test Polydocs</span><div class="ac"><svg class="ic" style="left:97px;top:17.9px;width:42px;height:42px;color:#717171;" viewBox="-21 -21 42 42"><path d="M0.00 -18.60L5.01 -15.41L10.93 -15.05L13.11 -9.52L17.69 -5.75L16.20 0.00L17.69 5.75L13.11 9.52L10.93 15.05L5.01 15.41L0.00 18.60L-5.01 15.41L-10.93 15.05L-13.11 9.52L-17.69 5.75L-16.20 0.00L-17.69 -5.75L-13.11 -9.52L-10.93 -15.05L-5.01 -15.41Z" stroke="currentColor" stroke-width="3.0" stroke-linejoin="round"/><path d="M-10.2 -2.3L-1.5 6.1L11.5 -6.4" fill="none" stroke="#f7f7f7" stroke-width="3.3" stroke-linecap="round" stroke-linejoin="round"/></svg><svg class="ic" style="left:155.9px;top:34.9px;width:32px;height:8px;color:#717171;" viewBox="0 0 32 8"><circle cx="4" cy="4" r="3.900"/><circle cx="16.100" cy="4" r="3.900"/><circle cx="28" cy="4" r="3.900"/></svg></div></div>
<div class="row e" style="top:720px"><div class="cb"><div class="ck"></div></div><span class="c lnk" style="left:184.5px;letter-spacing:0.5px">testfile.pdf</span><span class="c" style="left:657px">1</span><div class="bdg">Ready for validation</div><span class="c d" style="left:1075.5px">20.08.2025 10:54:03</span><span class="c" style="left:1403px">-</span><span class="c" style="left:1646px;letter-spacing:0.22px">Invoice</span><span class="c" style="left:1858.5px">Test Polydocs</span><span class="c" style="left:2168.5px">-</span><span class="c d" style="left:2468.5px">20.08.2025 10:54:21</span><span class="c" style="left:2797px">-</span><span class="c" style="left:3091.5px">Test Polydocs</span><div class="ac"><svg class="ic" style="left:97px;top:17.9px;width:42px;height:42px;color:#717171;" viewBox="-21 -21 42 42"><path d="M0.00 -18.60L5.01 -15.41L10.93 -15.05L13.11 -9.52L17.69 -5.75L16.20 0.00L17.69 5.75L13.11 9.52L10.93 15.05L5.01 15.41L0.00 18.60L-5.01 15.41L-10.93 15.05L-13.11 9.52L-17.69 5.75L-16.20 0.00L-17.69 -5.75L-13.11 -9.52L-10.93 -15.05L-5.01 -15.41Z" stroke="currentColor" stroke-width="3.0" stroke-linejoin="round"/><path d="M-10.2 -2.3L-1.5 6.1L11.5 -6.4" fill="none" stroke="#f7f7f7" stroke-width="3.3" stroke-linecap="round" stroke-linejoin="round"/></svg><svg class="ic" style="left:155.9px;top:34.9px;width:32px;height:8px;color:#717171;" viewBox="0 0 32 8"><circle cx="4" cy="4" r="3.900"/><circle cx="16.100" cy="4" r="3.900"/><circle cx="28" cy="4" r="3.900"/></svg></div></div>
<div class="row o" style="top:800px"><div class="cb"><div class="ck"></div></div><span class="c lnk" style="left:184.5px;letter-spacing:0.2px">multi_document_with<span class="el">...</span></span><span class="c" style="left:657px">1</span><div class="bdg">Ready for validation</div><span class="c d" style="left:1075.5px">20.08.2025 10:53:12</span><span class="c" style="left:1403px">-</span><span class="c" style="left:1646px;letter-spacing:0.22px">Invoice</span><span class="c" style="left:1858.5px">Test Polydocs</span><span class="c" style="left:2168.5px">-</span><span class="c d" style="left:2468.5px">20.08.2025 10:53:24</span><span class="c" style="left:2797px">-</span><span class="c" style="left:3091.5px">Test Polydocs</span><div class="ac"><svg class="ic" style="left:97px;top:17.9px;width:42px;height:42px;color:#717171;" viewBox="-21 -21 42 42"><path d="M0.00 -18.60L5.01 -15.41L10.93 -15.05L13.11 -9.52L17.69 -5.75L16.20 0.00L17.69 5.75L13.11 9.52L10.93 15.05L5.01 15.41L0.00 18.60L-5.01 15.41L-10.93 15.05L-13.11 9.52L-17.69 5.75L-16.20 0.00L-17.69 -5.75L-13.11 -9.52L-10.93 -15.05L-5.01 -15.41Z" stroke="currentColor" stroke-width="3.0" stroke-linejoin="round"/><path d="M-10.2 -2.3L-1.5 6.1L11.5 -6.4" fill="none" stroke="#f7f7f7" stroke-width="3.3" stroke-linecap="round" stroke-linejoin="round"/></svg><svg class="ic" style="left:155.9px;top:34.9px;width:32px;height:8px;color:#717171;" viewBox="0 0 32 8"><circle cx="4" cy="4" r="3.900"/><circle cx="16.100" cy="4" r="3.900"/><circle cx="28" cy="4" r="3.900"/></svg></div></div>
<div class="row e" style="top:880px"><div class="cb"><div class="ck"></div></div><span class="c lnk" style="left:184.5px;letter-spacing:0.1px">corrupted_document<span class="el">...</span></span><span class="c" style="left:657px">1</span><div class="bdg">Ready for validation</div><span class="c d" style="left:1075.5px">20.08.2025 10:52:53</span><span class="c" style="left:1403px">-</span><span class="c" style="left:1646px;letter-spacing:0.22px">Invoice</span><span class="c" style="left:1858.5px">Test Polydocs</span><span class="c" style="left:2168.5px">-</span><span class="c d" style="left:2468.5px">20.08.2025 10:53:07</span><span class="c" style="left:2797px">-</span><span class="c" style="left:3091.5px">Test Polydocs</span><div class="ac"><svg class="ic" style="left:97px;top:17.9px;width:42px;height:42px;color:#717171;" viewBox="-21 -21 42 42"><path d="M0.00 -18.60L5.01 -15.41L10.93 -15.05L13.11 -9.52L17.69 -5.75L16.20 0.00L17.69 5.75L13.11 9.52L10.93 15.05L5.01 15.41L0.00 18.60L-5.01 15.41L-10.93 15.05L-13.11 9.52L-17.69 5.75L-16.20 0.00L-17.69 -5.75L-13.11 -9.52L-10.93 -15.05L-5.01 -15.41Z" stroke="currentColor" stroke-width="3.0" stroke-linejoin="round"/><path d="M-10.2 -2.3L-1.5 6.1L11.5 -6.4" fill="none" stroke="#f7f7f7" stroke-width="3.3" stroke-linecap="round" stroke-linejoin="round"/></svg><svg class="ic" style="left:155.9px;top:34.9px;width:32px;height:8px;color:#717171;" viewBox="0 0 32 8"><circle cx="4" cy="4" r="3.900"/><circle cx="16.100" cy="4" r="3.900"/><circle cx="28" cy="4" r="3.900"/></svg></div></div>
<div class="row o" style="top:960px"><div class="cb"><div class="ck"></div></div><span class="c lnk" style="left:184.5px;letter-spacing:-0.15px">handle_corrupted_file<span class="el">...</span></span><span class="c" style="left:657px">1</span><div class="bdg">Ready for validation</div><span class="c d" style="left:1075.5px">20.08.2025 10:52:37</span><span class="c" style="left:1403px">-</span><span class="c" style="left:1646px;letter-spacing:0.22px">Invoice</span><span class="c" style="left:1858.5px">Test Polydocs</span><span class="c" style="left:2168.5px">-</span><span class="c d" style="left:2468.5px">20.08.2025 10:52:50</span><span class="c" style="left:2797px">-</span><span class="c" style="left:3091.5px">Test Polydocs</span><div class="ac"><svg class="ic" style="left:97px;top:17.9px;width:42px;height:42px;color:#717171;" viewBox="-21 -21 42 42"><path d="M0.00 -18.60L5.01 -15.41L10.93 -15.05L13.11 -9.52L17.69 -5.75L16.20 0.00L17.69 5.75L13.11 9.52L10.93 15.05L5.01 15.41L0.00 18.60L-5.01 15.41L-10.93 15.05L-13.11 9.52L-17.69 5.75L-16.20 0.00L-17.69 -5.75L-13.11 -9.52L-10.93 -15.05L-5.01 -15.41Z" stroke="currentColor" stroke-width="3.0" stroke-linejoin="round"/><path d="M-10.2 -2.3L-1.5 6.1L11.5 -6.4" fill="none" stroke="#f7f7f7" stroke-width="3.3" stroke-linecap="round" stroke-linejoin="round"/></svg><svg class="ic" style="left:155.9px;top:34.9px;width:32px;height:8px;color:#717171;" viewBox="0 0 32 8"><circle cx="4" cy="4" r="3.900"/><circle cx="16.100" cy="4" r="3.900"/><circle cx="28" cy="4" r="3.900"/></svg></div></div>
<div class="row e" style="top:1040px"><div class="cb"><div class="ck"></div></div><span class="c lnk" style="left:184.5px;letter-spacing:-0.18px">move_email_after_im<span class="el">...</span></span><span class="c" style="left:657px">1</span><div class="bdg">Ready for validation</div><span class="c d" style="left:1075.5px">20.08.2025 10:52:15</span><span class="c" style="left:1403px">-</span><span class="c" style="left:1646px;letter-spacing:0.22px">Invoice</span><span class="c" style="left:1858.5px">Test Polydocs</span><span class="c" style="left:2168.5px">-</span><span class="c d" style="left:2468.5px">20.08.2025 10:52:29</span><span class="c" style="left:2797px">-</span><span class="c" style="left:3091.5px">Test Polydocs</span><div class="ac"><svg class="ic" style="left:97px;top:17.9px;width:42px;height:42px;color:#717171;" viewBox="-21 -21 42 42"><path d="M0.00 -18.60L5.01 -15.41L10.93 -15.05L13.11 -9.52L17.69 -5.75L16.20 0.00L17.69 5.75L13.11 9.52L10.93 15.05L5.01 15.41L0.00 18.60L-5.01 15.41L-10.93 15.05L-13.11 9.52L-17.69 5.75L-16.20 0.00L-17.69 -5.75L-13.11 -9.52L-10.93 -15.05L-5.01 -15.41Z" stroke="currentColor" stroke-width="3.0" stroke-linejoin="round"/><path d="M-10.2 -2.3L-1.5 6.1L11.5 -6.4" fill="none" stroke="#f7f7f7" stroke-width="3.3" stroke-linecap="round" stroke-linejoin="round"/></svg><svg class="ic" style="left:155.9px;top:34.9px;width:32px;height:8px;color:#717171;" viewBox="0 0 32 8"><circle cx="4" cy="4" r="3.900"/><circle cx="16.100" cy="4" r="3.900"/><circle cx="28" cy="4" r="3.900"/></svg></div></div>
<div class="row o" style="top:1120px"><div class="cb"><div class="ck"></div></div><span class="c lnk" style="left:184.5px;letter-spacing:-0.17px">test_google_client_20<span class="el">...</span></span><span class="c" style="left:657px">1</span><div class="bdg">Ready for validation</div><span class="c d" style="left:1075.5px">20.08.2025 10:52:13</span><span class="c" style="left:1403px">-</span><span class="c" style="left:1646px;letter-spacing:0.22px">Invoice</span><span class="c" style="left:1858.5px">Test Polydocs</span><span class="c" style="left:2168.5px">-</span><span class="c d" style="left:2468.5px">20.08.2025 10:52:29</span><span class="c" style="left:2797px">-</span><span class="c" style="left:3091.5px">Test Polydocs</span><div class="ac"><svg class="ic" style="left:97px;top:17.9px;width:42px;height:42px;color:#717171;" viewBox="-21 -21 42 42"><path d="M0.00 -18.60L5.01 -15.41L10.93 -15.05L13.11 -9.52L17.69 -5.75L16.20 0.00L17.69 5.75L13.11 9.52L10.93 15.05L5.01 15.41L0.00 18.60L-5.01 15.41L-10.93 15.05L-13.11 9.52L-17.69 5.75L-16.20 0.00L-17.69 -5.75L-13.11 -9.52L-10.93 -15.05L-5.01 -15.41Z" stroke="currentColor" stroke-width="3.0" stroke-linejoin="round"/><path d="M-10.2 -2.3L-1.5 6.1L11.5 -6.4" fill="none" stroke="#f7f7f7" stroke-width="3.3" stroke-linecap="round" stroke-linejoin="round"/></svg><svg class="ic" style="left:155.9px;top:34.9px;width:32px;height:8px;color:#717171;" viewBox="0 0 32 8"><circle cx="4" cy="4" r="3.900"/><circle cx="16.100" cy="4" r="3.900"/><circle cx="28" cy="4" r="3.900"/></svg></div></div>
<div class="row e" style="top:1200px"><div class="cb"><div class="ck"></div></div><span class="c lnk" style="left:184.5px;letter-spacing:0.25px">test_microsoft_client<span class="el">...</span></span><span class="c" style="left:657px">1</span><div class="bdg">Ready for validation</div><span class="c d" style="left:1075.5px">20.08.2025 10:51:53</span><span class="c" style="left:1403px">-</span><span class="c" style="left:1646px;letter-spacing:0.22px">Invoice</span><span class="c" style="left:1858.5px">Test Polydocs</span><span class="c" style="left:2168.5px">-</span><span class="c d" style="left:2468.5px">20.08.2025 10:52:11</span><span class="c" style="left:2797px">-</span><span class="c" style="left:3091.5px">Test Polydocs</span><div class="ac"><svg class="ic" style="left:97px;top:17.9px;width:42px;height:42px;color:#717171;" viewBox="-21 -21 42 42"><path d="M0.00 -18.60L5.01 -15.41L10.93 -15.05L13.11 -9.52L17.69 -5.75L16.20 0.00L17.69 5.75L13.11 9.52L10.93 15.05L5.01 15.41L0.00 18.60L-5.01 15.41L-10.93 15.05L-13.11 9.52L-17.69 5.75L-16.20 0.00L-17.69 -5.75L-13.11 -9.52L-10.93 -15.05L-5.01 -15.41Z" stroke="currentColor" stroke-width="3.0" stroke-linejoin="round"/><path d="M-10.2 -2.3L-1.5 6.1L11.5 -6.4" fill="none" stroke="#f7f7f7" stroke-width="3.3" stroke-linecap="round" stroke-linejoin="round"/></svg><svg class="ic" style="left:155.9px;top:34.9px;width:32px;height:8px;color:#717171;" viewBox="0 0 32 8"><circle cx="4" cy="4" r="3.900"/><circle cx="16.100" cy="4" r="3.900"/><circle cx="28" cy="4" r="3.900"/></svg></div></div>
</div>
<div style="position:absolute;left:158px;top:1756px;width:3630px;height:96px;background:#fff"></div>
<div style="position:absolute;left:3389px;top:1756px;width:2px;height:96px;background:#e0e0e0"></div>
<span class="t " style="left:2981.5px;top:1784.0px;height:40px;line-height:40px;letter-spacing:-0.16px">Documents per Page:</span>
<span class="t " style="left:3266px;top:1784.0px;height:40px;line-height:40px;color:#222;letter-spacing:-0.8px">50</span>
<svg class="ic" style="left:3322.5px;top:1800px;width:20px;height:10px;color:#757575;" viewBox="0 0 20 10"><path d="M0 0H20L10 10z"/></svg>
<svg class="ic" style="left:3426px;top:1780px;width:48px;height:48px;color:#6eafc8;" viewBox="0 0 24 24"><path d="M18.41 16.59L13.82 12l4.59-4.59L17 6l-6 6 6 6zM6 6h2v12H6z"/></svg>
<svg class="ic" style="left:3487px;top:1780px;width:48px;height:48px;color:#6eafc8;" viewBox="0 0 24 24"><path d="M15.41 7.41L14 6l-6 6 6 6 1.410-1.410L10.830 12z"/></svg>
<span class="t " style="left:3560px;top:1784.0px;height:40px;line-height:40px;letter-spacing:0.9px;color:#616161">1 / 4</span>
<svg class="ic" style="left:3644px;top:1780px;width:48px;height:48px;color:#2b87ab;" viewBox="0 0 24 24"><path d="M10 6L8.590 7.410 13.170 12l-4.580 4.590L10 18l6-6z"/></svg>
<svg class="ic" style="left:3704px;top:1780px;width:48px;height:48px;color:#2b87ab;" viewBox="0 0 24 24"><path d="M5.590 7.410L10.180 12l-4.590 4.590L7 18l6-6-6-6zM16 6h2v12h-2z"/></svg>
<div style="position:absolute;left:174px;top:1894px;width:3598px;height:2px;background:#dcdcdc"></div>
<div style="position:absolute;left:158px;top:296px;width:448px;height:588px;background:#fff;border-radius:9px;box-shadow:0 1px 8px rgba(0,0,0,0.2),0 0 2px rgba(0,0,0,0.1)"></div>
<div class="box" style="left:190px;top:316px;width:384px;height:80px"></div>
<span class="t " style="left:213px;top:336.0px;height:40px;line-height:40px;letter-spacing:0px;color:#6e6e6e">Search by name or Id...</span>
<div style="position:absolute;left:158px;top:416px;width:448px;height:2px;background:#dedede"></div>
<svg class="ic" style="left:190px;top:440px;width:28px;height:28px;color:#6e6e6e;" viewBox="0 32 448 448"><path d="M416 208H272V64c0-17.670-14.330-32-32-32h-32c-17.670 0-32 14.330-32 32v144H32c-17.670 0-32 14.330-32 32v32c0 17.670 14.330 32 32 32h144v144c0 17.670 14.330 32 32 32h32c17.670 0 32-14.330 32-32V304h144c17.670 0 32-14.330 32-32v-32c0-17.670-14.330-32-32-32z"/></svg>
<span class="t " style="left:234px;top:434.2px;height:40px;line-height:40px;color:#111;letter-spacing:-0.3px">Create new Dashboard</span>
<svg class="ic" style="left:191.5px;top:512px;width:24.5px;height:28px;color:#6e6e6e;" viewBox="0 0 41 48.4" preserveAspectRatio="none"><circle cx="20.500" cy="11.300" r="11.300"/><path d="M0 46.900A20.500 21 0 0 1 41 46.900Q41 48.400 39.500 48.400H1.500Q0 48.400 0 46.900Z"/></svg>
<span class="t " style="left:233px;top:506.0px;height:40px;line-height:40px;color:#111;letter-spacing:-0.02px">Default Dashboard</span>
<div style="position:absolute;left:190px;top:562px;width:384px;height:2px;background:#dedede"></div>
<svg class="ic" style="left:190px;top:586px;width:28px;height:28px;color:#ababab;" viewBox="0 0 28 28"><g transform="translate(0.3 27.7) rotate(-45)"><path d="M0 0L7.200 -4V4Z"/><rect x="8" y="-4" width="21.800" height="8"/><path d="M30.800 -4H37.300a2 2 0 0 1 2 2V2a2 2 0 0 1 -2 2H30.800Z"/></g></svg>
<span class="t " style="left:234px;top:579.8px;height:40px;line-height:40px;color:#6b6b6b;letter-spacing:-0.48px">Save Dashboard Changes</span>
<svg class="ic" style="left:190px;top:663px;width:28px;height:18px;color:#ababab;" viewBox="0 0 28 18"><rect x="0" y="0" width="28" height="18" rx="2"/><g fill="#fff"><rect x="3.0" y="3" width="2.600" height="2.600"/><rect x="7.6" y="3" width="2.600" height="2.600"/><rect x="12.2" y="3" width="2.600" height="2.600"/><rect x="16.8" y="3" width="2.600" height="2.600"/><rect x="21.4" y="3" width="2.600" height="2.600"/><rect x="3.0" y="7.500" width="2.600" height="2.600"/><rect x="7.6" y="7.500" width="2.600" height="2.600"/><rect x="12.2" y="7.500" width="2.600" height="2.600"/><rect x="16.8" y="7.500" width="2.600" height="2.600"/><rect x="21.4" y="7.500" width="2.600" height="2.600"/><rect x="3" y="12.300" width="2.600" height="2.600"/><rect x="7.600" y="12.300" width="12.800" height="2.600"/><rect x="22.400" y="12.300" width="2.600" height="2.600"/></g></svg>
<span class="t " style="left:233px;top:652.0px;height:40px;line-height:40px;color:#6b6b6b;letter-spacing:-0.19px">Rename current Dashboard</span>
<svg class="ic" style="left:190px;top:765.5px;width:28px;height:24px;color:#6e6e6e;" viewBox="0 0 512 512" preserveAspectRatio="none"><path d="M487.976 0H24.028C2.710 0-8.047 25.866 7.058 40.971L192 225.941V432c0 7.831 3.821 15.170 10.237 19.662l80 55.980C298.020 518.690 320 507.493 320 487.980V225.941l184.947-184.970C520.021 25.896 509.338 0 487.976 0z"/></svg>
<span class="t " style="left:233px;top:757.8px;height:40px;line-height:40px;color:#111;letter-spacing:-0.12px">My-Dashboard</span>
<svg class="ic" style="left:193px;top:838px;width:21.6px;height:24px;color:#6e6e6e;" viewBox="3 2 18 20"><path d="M18 16.080c-.760 0-1.440.300-1.960.770L8.910 12.700c.050-.230.090-.460.090-.700s-.040-.470-.090-.700l7.050-4.110c.540.500 1.250.810 2.040.810 1.660 0 3-1.340 3-3s-1.340-3-3-3-3 1.340-3 3c0 .240.040.470.090.700L8.040 9.810C7.500 9.310 6.790 9 6 9c-1.660 0-3 1.340-3 3s1.340 3 3 3c.790 0 1.500-.310 2.040-.810l7.120 4.160c-.050.210-.080.430-.080.650 0 1.610 1.310 2.920 2.920 2.920 1.610 0 2.920-1.310 2.920-2.920s-1.310-2.920-2.920-2.920z"/></svg>
<span class="t " style="left:234px;top:829.5px;height:40px;line-height:40px;color:#111;letter-spacing:-0.31px">Shared Dashbaord</span>
<div style="position:absolute;left:147px;top:708px;width:473px;height:189px;border:15px solid #33fbfd;border-radius:26px"></div>
</body></html>
